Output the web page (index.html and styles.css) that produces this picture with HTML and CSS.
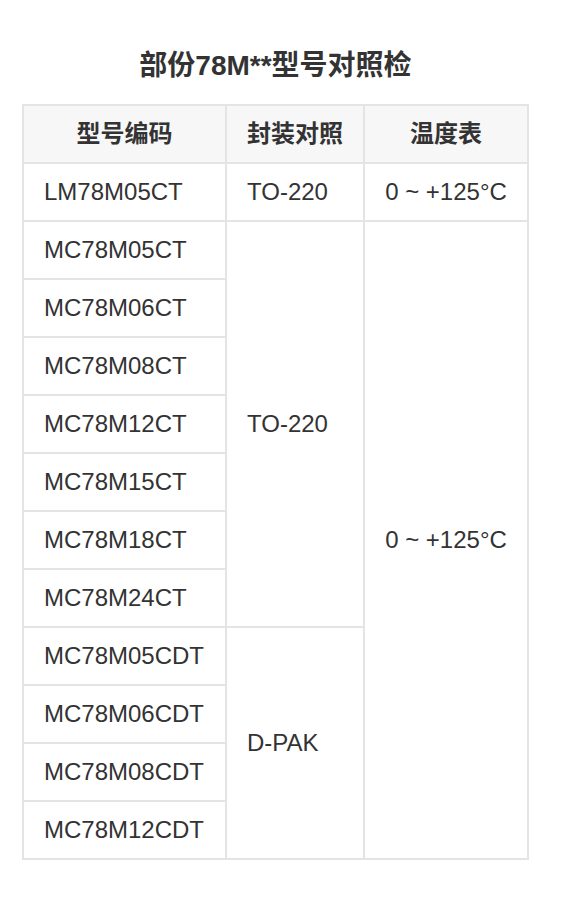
FILE: index.html
```html
<!DOCTYPE html>
<html lang="zh">
<head>
<meta charset="utf-8">
<link rel="stylesheet" href="styles.css">
</head>
<body>
<div class="page">
  <h1 class="title">部份78M**型号对照检</h1>
  <table class="grid">
    <colgroup>
      <col class="c1"><col class="c2"><col class="c3">
    </colgroup>
    <thead>
      <tr><th>型号编码</th><th>封装对照</th><th>温度表</th></tr>
    </thead>
    <tbody>
      <tr><td>LM78M05CT</td><td>TO-220</td><td class="mid">0 ~ +125°C</td></tr>
      <tr><td>MC78M05CT</td><td rowspan="7">TO-220</td><td rowspan="11" class="mid">0 ~ +125°C</td></tr>
      <tr><td>MC78M06CT</td></tr>
      <tr><td>MC78M08CT</td></tr>
      <tr><td>MC78M12CT</td></tr>
      <tr><td>MC78M15CT</td></tr>
      <tr><td>MC78M18CT</td></tr>
      <tr><td>MC78M24CT</td></tr>
      <tr><td>MC78M05CDT</td><td rowspan="4">D-PAK</td></tr>
      <tr><td>MC78M06CDT</td></tr>
      <tr><td>MC78M08CDT</td></tr>
      <tr><td>MC78M12CDT</td></tr>
    </tbody>
  </table>
</div>
</body>
</html>
```

FILE: styles.css
```css
html, body {
  margin: 0;
  padding: 0;
  background: #fff;
}
body {
  font-family: "Liberation Sans", Arial, "Noto Sans CJK SC", sans-serif;
  color: #333;
}
.page {
  padding: 48px 0 0 22px;
  width: 507px;
}
.title {
  margin: 0 0 20px;
  font-size: 28px;
  line-height: 36px;
  font-weight: bold;
  text-align: center;
  color: #333;
}
.grid {
  border-collapse: collapse;
  table-layout: fixed;
  width: 507px;
  font-size: 24px;
}
.c1 { width: 203px; }
.c2 { width: 138px; }
.c3 { width: 164px; }
.grid th, .grid td {
  border: 2px solid #e4e4e4;
  height: 32px;
  line-height: 32px;
  padding: 12px 20px;
  text-align: left;
  vertical-align: middle;
  font-weight: normal;
}
.grid th {
  background: #f7f7f7;
  font-weight: bold;
  text-align: center;
}
.grid td.mid {
  text-align: center;
}
```
